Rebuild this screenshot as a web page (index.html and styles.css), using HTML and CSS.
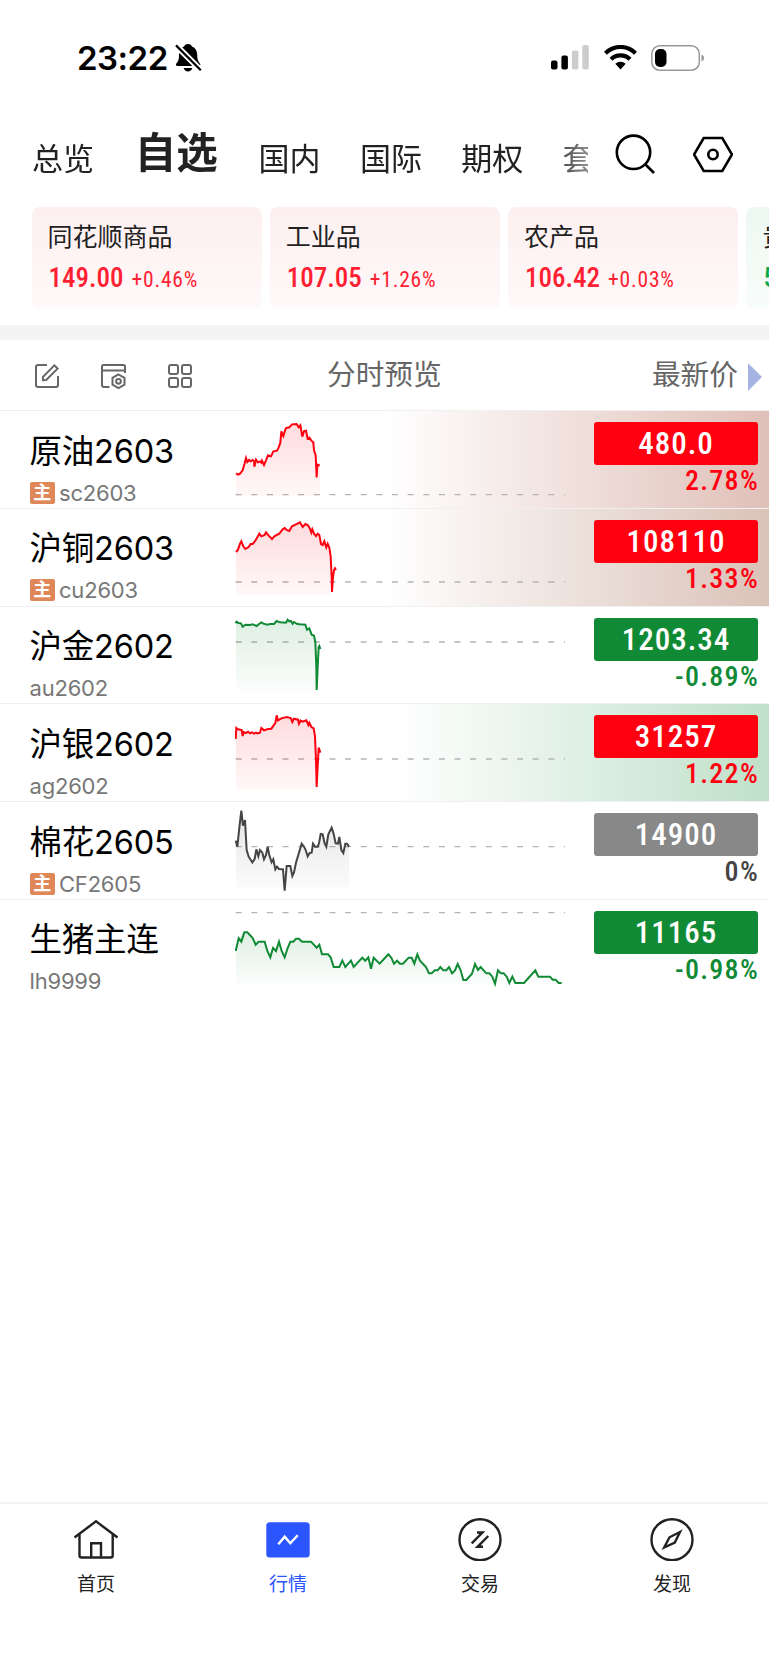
FILE: index.html
```html
<!DOCTYPE html>
<html lang="zh-CN">
<head>
  <meta charset="UTF-8" />
  <meta name="viewport" content="width=device-width, initial-scale=1.0"/>
  <title>自选行情</title>
  <link rel="stylesheet" href="styles.css">
</head>
<body>
  <div class="status-bar">
    <span class="time">23:22</span>
    <svg class="bell" width="27" height="30" viewBox="0 0 27 30">
      <path d="M13 1c2.3 0 3.6 1.3 4 2.6 3.600 1.400 5.200 4.600 5.200 8.400 0 4.500 1 6.500 2.800 8.700.8 1 .2 2.300-1 2.300H2.500C1 23 .5 21.600 1.300 20.600 3.300 18.200 4 16.500 4 12c0-4 1.600-7 5-8.400C9.500 2.300 10.700 1 13 1z"/>
      <path d="M8.700 25h8.600c-.5 2.300-2.200 3.500-4.300 3.500S9.200 27.300 8.700 25z"/>
      <path d="M.8 2.200 25.800 27.200" stroke="#fff" stroke-width="6"/>
      <path d="M1 2.400 25.800 27.200" stroke="#000" stroke-width="2.200"/>
    </svg>
    <div class="status-right">
      <svg width="38" height="25" viewBox="0 0 38 25">
        <rect x="0" y="15.500" width="6.500" height="9" rx="2"/>
        <rect x="10.400" y="10.500" width="6.500" height="14" rx="2"/>
        <rect x="20.900" y="5.500" width="6.500" height="19" rx="2" fill="#ccc"/>
        <rect x="31.300" y="0" width="6.500" height="24.500" rx="2" fill="#ccc"/>
      </svg>
      <svg width="33" height="25" viewBox="0 0 33 25">
        <path d="M1.500 8.200C10-.1 23-.1 31.500 8.200M7 14.300c5.400-5.200 13.600-5.200 19 0" fill="none" stroke="#000" stroke-width="4.200"/>
        <path d="M11.300 18.800c3-2.800 7.400-2.800 10.400 0L16.500 24.500z"/>
      </svg>
      <svg width="54" height="26" viewBox="0 0 54 26">
        <rect x=".8" y=".8" width="47.500" height="24.400" rx="8" fill="none" stroke="#999" stroke-width="1.500"/>
        <rect x="4" y="4" width="11.500" height="18" rx="5"/>
        <path d="M50.500 9.500c3.400 1.300 3.400 5.700 0 7z" fill="#999"/>
      </svg>
    </div>
  </div>

  <div class="top-nav">
    <div class="tabs">
      <span>总览</span>
      <span class="active">自选</span>
      <span>国内</span>
      <span>国际</span>
      <span>期权</span>
      <span>套</span>
    </div>
    <svg class="search" width="40" height="40" viewBox="0 0 40 40">
      <circle cx="18.500" cy="18.300" r="16.700"/>
      <path d="M30 30l9 9"/>
    </svg>
    <svg class="setting" width="40" height="40" viewBox="0 0 40 40">
      <path d="M10.700 4h18.600L39 20.500 29.300 37H10.700L1 20.500z"/>
      <circle cx="20" cy="20.500" r="4.700"/>
    </svg>
  </div>

  <div class="indexes">
    <div class="card up">
      <div class="card-name">同花顺商品</div>
      <div class="card-data"><b>149.00</b><i>+0.46%</i></div>
    </div>
    <div class="card up">
      <div class="card-name">工业品</div>
      <div class="card-data"><b>107.05</b><i>+1.26%</i></div>
    </div>
    <div class="card up">
      <div class="card-name">农产品</div>
      <div class="card-data"><b>106.42</b><i>+0.03%</i></div>
    </div>
    <div class="card down">
      <div class="card-name">贵</div>
      <div class="card-data"><b>5</b></div>
    </div>
  </div>

  <div class="toolbar">
    <div class="tools">
      <svg width="24" height="24" viewBox="0 0 24 24">
        <path d="M12 1H3Q1 1 1 3v18q0 2 2 2h18q2 0 2-2v-9"/>
        <path d="M8 16.200v-3.400L19.400 1.400l3.200 3.200L11.200 16z"/>
      </svg>
      <svg width="25" height="24" viewBox="0 0 25 24">
        <path d="M8.500 23H3q-2 0-2-2V2.500Q1 1 2.500 1h20Q24 1 24 2.500V9M1 6.500h23"/>
        <path d="M17.500 10.500l6 3.400v6.800l-6 3.400-6-3.400v-6.800z"/>
        <circle cx="17.500" cy="17.300" r="2.400"/>
      </svg>
      <svg width="24" height="24" viewBox="0 0 24 24">
        <rect x="1" y="1" width="9" height="9" rx="2"/>
        <rect x="14" y="1" width="9" height="9" rx="2"/>
        <rect x="1" y="14" width="9" height="9" rx="2"/>
        <rect x="14" y="14" width="9" height="9" rx="2"/>
      </svg>
    </div>
    <div class="col-chart">分时预览</div>
    <div class="col-price">最新价</div>
    <div class="arrow"></div>
  </div>

  <svg class="defs" width="0" height="0">
    <linearGradient id="redFill" x1="0" y1="0" x2="0" y2="1">
      <stop offset="0" stop-color="#ff0010" stop-opacity=".14"/>
      <stop offset="1" stop-color="#ff0010" stop-opacity=".03"/>
    </linearGradient>
    <linearGradient id="greenFill" x1="0" y1="0" x2="0" y2="1">
      <stop offset="0" stop-color="#108a34" stop-opacity=".14"/>
      <stop offset="1" stop-color="#108a34" stop-opacity=".01"/>
    </linearGradient>
    <linearGradient id="grayFill" x1="0" y1="0" x2="0" y2="1">
      <stop offset="0" stop-color="#444" stop-opacity=".14"/>
      <stop offset="1" stop-color="#444" stop-opacity=".02"/>
    </linearGradient>
  </svg>

  <div class="list">
    <div class="row up glow-red">
      <div class="info">
        <div class="name">原油2603</div>
        <div class="code"><em>主</em>sc2603</div>
      </div>
      <svg class="chart" viewBox="45 3 990 293">
        <path class="base" d="M47 254H1035"/>
        <path class="area" d="M48 258V190L54 194 60 191 68 181 74 160 78 144 82 156 87 150 98 150 103 160 108 149 114 157 126 152 132 165 138 151 144 136 153 139 160 124 171 122 181 98 184 64 190 78 198 54 208 52 216 43 230 42 236 52 241 46 247 80 252 63 258 62 263 86 274 92 280 97 287 136 290 165 300 167V258z"/>
        <polyline class="line" points="48,190 54,194 60,191 68,181 74,160 78,144 82,156 87,150 92,154 98,150 102,153 103,170 108,149 114,157 120,154 124,158 126,152 132,165 138,151 144,136 153,139 160,124 171,122 176,112 181,98 184,64 190,78 195,62 198,54 208,52 216,43 230,42 236,52 241,46 247,80 252,63 258,62 263,86 268,83 274,92 280,97 282,120 287,136 290,202 292,163 299,167"/>
      </svg>
      <div class="quote">
        <div class="price">480.0</div>
        <div class="rate">2.78%</div>
      </div>
    </div>

    <div class="row up glow-brown">
      <div class="info">
        <div class="name">沪铜2603</div>
        <div class="code"><em>主</em>cu2603</div>
      </div>
      <svg class="chart" viewBox="45 296 990 293">
        <path class="base" d="M47 515H1035"/>
        <path class="area" d="M48 552V425L54 418 64 393 76 416 92 401 98 401 118 370 124 378 138 366 156 386 164 377 178 370 194 353 208 362 216 348 240 336 248 350 256 341 264 345 274 367 282 370 288 377 298 374 303 401 313 393 319 411 328 412 332 438 336 552z"/>
        <polyline class="line" points="48,425 54,418 60,400 64,393 70,408 76,416 86,410 92,401 98,401 106,391 112,381 118,370 124,378 134,374 138,366 146,376 156,386 164,377 178,370 188,357 194,353 200,359 208,362 216,348 228,342 240,336 248,350 256,341 264,345 270,356 274,367 277,357 282,370 288,377 293,370 298,374 303,401 308,404 313,393 319,411 323,400 328,412 332,438 335,500 336,545 339,500 342,480 345,474 348,479"/>
      </svg>
      <div class="quote">
        <div class="price">108110</div>
        <div class="rate">1.33%</div>
      </div>
    </div>

    <div class="row down">
      <div class="info">
        <div class="name">沪金2602</div>
        <div class="code">au2602</div>
      </div>
      <svg class="chart" viewBox="45 20 990 293">
        <path class="base" d="M47 125H1035"/>
        <path class="area" d="M48 275V66L63 69 68 79 90 74 110 77 124 66 142 73 162 71 170 62 198 67 203 58 218 70 256 73 261 88 268 84 275 103 282 106 286 125 290 275z"/>
        <polyline class="line" points="46,68 50,64 55,68 63,69 68,79 76,73 90,74 98,72 110,77 118,70 124,66 130,70 142,73 150,71 162,71 170,62 180,66 198,67 203,58 208,63 213,62 218,70 222,65 232,71 240,72 256,73 261,88 268,84 275,103 282,106 286,125 289,200 290,269 293,200 296,140 298,137 301,146"/>
      </svg>
      <div class="quote">
        <div class="price">1203.34</div>
        <div class="rate">-0.89%</div>
      </div>
    </div>

    <div class="row up glow-green">
      <div class="info">
        <div class="name">沪银2602</div>
        <div class="code">ag2602</div>
      </div>
      <svg class="chart" viewBox="45 313 990 293">
        <path class="base" d="M47 478H1035"/>
        <path class="area" d="M48 570V388L65 391 71 397 120 399 124 385 154 387 166 370 170 347 174 362 200 352 234 360 259 362 281 386 285 410 290 570z"/>
        <polyline class="line" points="47,418 49,385 54,389 65,391 68,409 71,397 78,400 84,396 90,401 96,398 102,402 108,399 112,401 120,399 124,385 132,392 144,388 154,387 166,370 170,347 174,362 184,356 200,352 212,355 217,367 222,357 234,360 237,372 242,363 248,366 259,362 265,376 268,369 274,382 281,386 285,410 288,480 290,562 294,480 296,444 301,459"/>
      </svg>
      <div class="quote">
        <div class="price">31257</div>
        <div class="rate">1.22%</div>
      </div>
    </div>

    <div class="row flat">
      <div class="info">
        <div class="name">棉花2605</div>
        <div class="code"><em>主</em>CF2605</div>
      </div>
      <svg class="chart" viewBox="45 36 990 293">
        <path class="base" d="M47 170H1035"/>
        <path class="area" d="M48 292V152L52 170 64 62 69 107 75 93 80 180 86 200 97 217 109 178 120 180 132 208 143 170 155 217 166 238 189 238 194 290 200 228 211 228 217 258 245 161 263 199 275 188 279 161 293 170 302 132 308 133 319 170 325 133 335 113 347 160 358 141 370 189 376 161 387 169V292z"/>
        <polyline class="line" points="47,152 52,170 58,113 64,62 69,107 75,90 80,180 86,200 97,217 104,207 109,178 115,199 120,180 127,188 132,208 138,195 143,170 148,196 155,217 160,208 166,238 171,230 177,237 189,238 194,302 200,228 211,228 217,258 222,247 228,218 245,161 252,170 257,180 263,199 269,189 275,188 279,161 285,170 293,170 297,160 302,132 308,133 314,160 319,170 325,133 335,113 341,132 347,160 354,161 358,141 364,180 370,189 376,161 381,161 387,170"/>
      </svg>
      <div class="quote">
        <div class="price">14900</div>
        <div class="rate">0%</div>
      </div>
    </div>

    <div class="row down">
      <div class="info">
        <div class="name">生猪主连</div>
        <div class="code">lh9999</div>
      </div>
      <svg class="chart" viewBox="45 329 990 293">
        <path class="base" d="M47 367H1035"/>
        <path class="area" d="M48 585V480L56 444 73 426 82 426 107 463 134 454 151 501 177 454 194 501 211 454 237 445 273 454 290 472 306 492 324 492 341 530 401 530 427 502 453 530 461 502 479 520 505 492 522 520 549 520 575 502 592 492 627 549 661 530 687 530 713 521 730 569 739 569 765 521 817 559 834 540 868 578 912 578 946 540 955 559 990 559 1024 578V585z"/>
        <polyline class="line" points="47,482 56,444 64,454 73,426 82,426 98,443 107,463 116,454 134,454 142,482 151,501 159,473 168,482 177,454 185,482 194,501 203,473 211,454 220,454 228,445 237,445 246,454 273,454 290,472 298,463 306,492 324,492 332,501 341,530 358,530 367,511 376,530 393,511 401,530 427,502 436,511 445,501 453,535 461,502 479,520 505,492 514,502 522,520 531,511 540,520 549,520 566,502 575,502 583,520 592,492 600,511 618,530 627,549 635,549 644,540 653,540 661,530 670,540 679,540 687,530 696,549 705,540 713,521 722,540 730,569 739,569 756,550 765,521 774,539 782,530 799,549 808,549 817,559 825,580 834,540 843,549 851,549 860,559 868,578 877,559 886,578 912,578 946,540 955,559 990,559 998,568 1007,568 1016,578 1025,578"/>
      </svg>
      <div class="quote">
        <div class="price">11165</div>
        <div class="rate">-0.98%</div>
      </div>
    </div>
  </div>

  <div class="tab-bar">
    <div class="tab-item">
      <svg width="44" height="44" viewBox="0 0 44 44">
        <path d="M.5 20.500 22 4.300 43.500 20.500M5.500 17.500v21q0 2 2 2h29.200q2 0 2-2v-21M17.200 40V26.300h9.800V40"/>
      </svg>
      <span>首页</span>
    </div>
    <div class="tab-item active">
      <svg width="44" height="44" viewBox="0 0 44 44">
        <rect x=".3" y="5.300" width="43.400" height="35.200" rx="3.500"/>
        <path d="M12.300 27.300 18.700 19.700 24.300 26.300 31.700 18.300"/>
      </svg>
      <span>行情</span>
    </div>
    <div class="tab-item">
      <svg width="44" height="44" viewBox="0 0 44 44">
        <circle cx="22" cy="22.700" r="20.500"/>
        <path d="M13.700 26.300 24.500 15.500H19M30.300 19 19.500 29.800H25"/>
        <path class="solid" d="M20 15.500h5l-3 3zM24 29.800h-5l3-3z"/>
      </svg>
      <span>交易</span>
    </div>
    <div class="tab-item">
      <svg width="44" height="44" viewBox="0 0 44 44">
        <circle cx="22" cy="22.700" r="20.500"/>
        <path d="M30 15 19.500 20.300 14.200 30.500 24.800 25.500z"/>
      </svg>
      <span>发现</span>
    </div>
  </div>
</body>
</html>
```

FILE: styles.css
```css
* {
  box-sizing: border-box;
}

body {
  margin: 0;
  height: 1665px;
  display: flex;
  flex-direction: column;
  overflow: hidden;
  background: #fff;
  color: #222;
  font-family: Inter, 'Noto Sans CJK SC', sans-serif;
}

svg {
  display: block;
  flex: none;
}

/* status bar */
.status-bar {
  height: 115px;
  padding: 0 64px 0 77px;
  display: flex;
  align-items: center;
}

.time {
  font-size: 33px;
  font-weight: 600;
  color: #000;
  letter-spacing: -0.5px;
}

.bell {
  margin-left: 7px;
}

.status-right {
  margin-left: auto;
  display: flex;
  align-items: center;
  gap: 14.500px;
}

/* top tabs */
.top-nav {
  height: 92px;
  padding-left: 32px;
  display: flex;
}

.tabs {
  width: 556px;
  display: flex;
  align-items: flex-start;
  gap: 39.300px;
  overflow: hidden;
  white-space: nowrap;
  font-size: 31px;
  line-height: 87px;
  -webkit-mask-image: linear-gradient(to right, #000 515px, rgba(0, 0, 0, 0.5) 556px);
  mask-image: linear-gradient(to right, #000 515px, rgba(0, 0, 0, 0.5) 556px);
}

.tabs .active {
  margin: 0 1.500px;
  font-size: 41.500px;
  line-height: 77px;
  font-weight: 600;
}

.search,
.setting {
  margin-top: 19px;
  fill: none;
  stroke: #000;
  stroke-width: 2.600;
}

.search {
  margin-left: 27px;
}

.setting {
  margin-left: 38px;
}

/* index cards */
.indexes {
  height: 118px;
  padding-left: 31.500px;
  display: flex;
  gap: 8.300px;
  overflow: hidden;
}

.card {
  flex: none;
  width: 230px;
  height: 102px;
  padding: 12px 16px;
  border-radius: 8px;
}

.card.up {
  background: linear-gradient(#fdeff0, #fff9f9);
  color: #ff1f33;
}

.card.down {
  background: linear-gradient(#edf8f2, #f8fdfa);
  color: #0aa84c;
}

.card-name {
  font-size: 25px;
  line-height: 36px;
  color: #222;
}

.card-data {
  display: flex;
  align-items: baseline;
  gap: 8px;
  padding-left: 1px;
  font-family: Roboto, sans-serif;
  font-stretch: 85%;
  line-height: 46px;
}

.card-data b {
  font-size: 27px;
  font-weight: 500;
}

.card-data i {
  font-style: normal;
  font-size: 21.500px;
  font-weight: 450;
  letter-spacing: 0.8px;
}

/* toolbar */
.toolbar {
  height: 86px;
  border-top: 15px solid #f4f4f4;
  border-bottom: 1px solid #f0f0f0;
  display: flex;
  align-items: center;
  color: #666;
  font-size: 28.700px;
  line-height: 42px;
}

.tools {
  width: 327px;
  padding: 1px 0 0 35px;
  display: flex;
  align-items: center;
  gap: 42px;
}

.tools svg {
  overflow: visible;
  fill: none;
  stroke: #666;
  stroke-width: 2;
}

.col-price {
  margin-left: auto;
}

.arrow {
  margin: 4px 7px 0 10px;
  border-left: 14px solid #a5b3e3;
  border-top: 14px solid transparent;
  border-bottom: 14px solid transparent;
}

.defs {
  position: absolute;
}

/* quote list */
.row {
  height: 97.800px;
  display: flex;
  border-bottom: 1px solid #f0f0f0;
}

.row:last-child {
  border-bottom: none;
}

.glow-red {
  background: linear-gradient(to right, #fff 385px, #e0c0b8);
}

.glow-brown {
  background: linear-gradient(to right, #fff 385px, #dac2b8);
}

.glow-green {
  background: linear-gradient(to right, #fff 395px, #bfe0c9);
}

.info {
  width: 235px;
  padding: 18.500px 0 0 29.500px;
}

.name {
  font-size: 32.500px;
  line-height: 44px;
  color: #000;
  letter-spacing: -0.2px;
}

.code {
  display: flex;
  align-items: center;
  gap: 4px;
  margin-top: 6px;
  font-size: 22px;
  line-height: 26px;
  letter-spacing: -0.2px;
  color: #777;
}

.code em {
  width: 25.500px;
  height: 22px;
  border-radius: 2px;
  background: #e0875a;
  color: #fff;
  font-size: 18px;
  font-style: normal;
  font-weight: 600;
  line-height: 21px;
  text-align: center;
}

.chart {
  width: 330px;
  height: 97.700px;
}

.base {
  stroke: #b4b4b4;
  stroke-width: 4;
  stroke-dasharray: 18 28.900;
}

.line {
  fill: none;
  stroke-width: 6;
}

.up .line {
  stroke: #ff0010;
}

.up .area {
  fill: url(#redFill);
}

.down .line {
  stroke: #108a34;
}

.down .area {
  fill: url(#greenFill);
}

.flat .line {
  stroke: #444;
}

.flat .area {
  fill: url(#grayFill);
}

.quote {
  width: 164px;
  margin-left: 29px;
  padding-top: 11px;
  font-family: Roboto, sans-serif;
  font-stretch: 85%;
}

.price {
  height: 43px;
  border-radius: 3px;
  color: #fff;
  font-size: 31px;
  font-weight: 500;
  line-height: 43px;
  letter-spacing: 1px;
  text-align: center;
}

.rate {
  margin-right: -1px;
  font-size: 28px;
  font-weight: 500;
  line-height: 32px;
  letter-spacing: 1.300px;
  text-align: right;
}

.up .price {
  background: #ff0010;
}

.up .rate {
  color: #ff0010;
}

.down .price {
  background: #108a34;
}

.down .rate {
  color: #108a34;
}

.flat .price {
  background: #888;
}

.flat .rate {
  color: #444;
}

/* bottom bar */
.tab-bar {
  height: 163px;
  margin-top: auto;
  padding: 13px 1px 0 0;
  border-top: 2px solid #f4f4f4;
  display: grid;
  grid-template-columns: repeat(4, 1fr);
}

.tab-item {
  display: flex;
  flex-direction: column;
  align-items: center;
  gap: 10px;
  font-size: 19px;
  line-height: 28px;
}

.tab-item svg {
  fill: none;
  stroke: #222;
  stroke-width: 2.400;
}

.tab-item .solid {
  fill: #222;
  stroke: none;
}

.tab-item.active {
  color: #2b55ff;
}

.tab-item.active svg {
  stroke: #fff;
}

.tab-item.active rect {
  fill: #2b55ff;
  stroke: none;
}
```
